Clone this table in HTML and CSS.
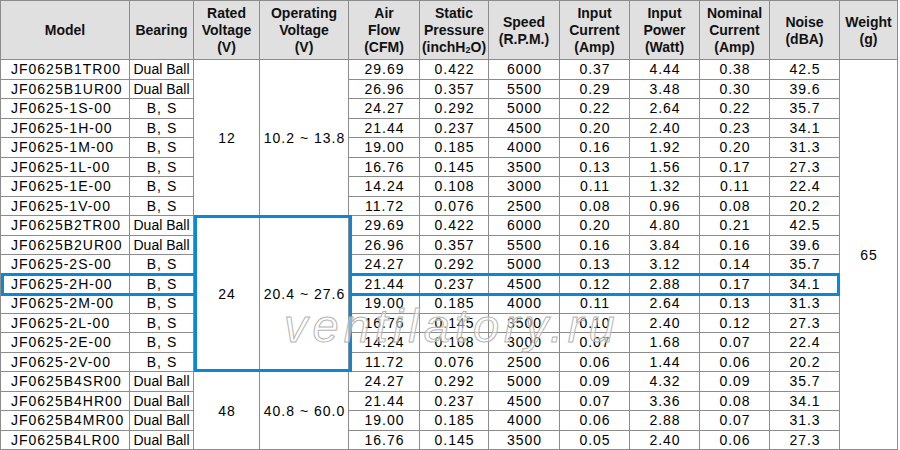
FILE: index.html
```html
<!DOCTYPE html>
<html>
<head>
<meta charset="utf-8">
<link rel="stylesheet" href="styles.css">
</head>
<body>
<div class="sheet">
  <div class="grid">
    <div class="h"><span>Model</span></div>
    <div class="h"><span>Bearing</span></div>
    <div class="h"><span>Rated<br>Voltage<br>(V)</span></div>
    <div class="h"><span>Operating<br>Voltage<br>(V)</span></div>
    <div class="h"><span>Air<br>Flow<br>(CFM)</span></div>
    <div class="h"><span>Static<br>Pressure<br>(inchH<span class="sub">2</span>O)</span></div>
    <div class="h"><span>Speed<br>(R.P.M.)</span></div>
    <div class="h"><span>Input<br>Current<br>(Amp)</span></div>
    <div class="h"><span>Input<br>Power<br>(Watt)</span></div>
    <div class="h"><span>Nominal<br>Current<br>(Amp)</span></div>
    <div class="h"><span>Noise<br>(dBA)</span></div>
    <div class="h"><span>Weight<br>(g)</span></div>

    <div class="c m">JF0625B1TR00</div><div class="c b">Dual Ball</div>
    <div class="c v r8">12</div><div class="c v r8">10.2 ~ 13.8</div>
    <div class="c">29.69</div><div class="c">0.422</div><div class="c">6000</div><div class="c">0.37</div><div class="c">4.44</div><div class="c">0.38</div><div class="c">42.5</div>
    <div class="c v r20">65</div>

    <div class="c m">JF0625B1UR00</div><div class="c b">Dual Ball</div>
    <div class="c">26.96</div><div class="c">0.357</div><div class="c">5500</div><div class="c">0.29</div><div class="c">3.48</div><div class="c">0.30</div><div class="c">39.6</div>

    <div class="c m">JF0625-1S-00</div><div class="c">B, S</div>
    <div class="c">24.27</div><div class="c">0.292</div><div class="c">5000</div><div class="c">0.22</div><div class="c">2.64</div><div class="c">0.22</div><div class="c">35.7</div>

    <div class="c m">JF0625-1H-00</div><div class="c">B, S</div>
    <div class="c">21.44</div><div class="c">0.237</div><div class="c">4500</div><div class="c">0.20</div><div class="c">2.40</div><div class="c">0.23</div><div class="c">34.1</div>

    <div class="c m">JF0625-1M-00</div><div class="c">B, S</div>
    <div class="c">19.00</div><div class="c">0.185</div><div class="c">4000</div><div class="c">0.16</div><div class="c">1.92</div><div class="c">0.20</div><div class="c">31.3</div>

    <div class="c m">JF0625-1L-00</div><div class="c">B, S</div>
    <div class="c">16.76</div><div class="c">0.145</div><div class="c">3500</div><div class="c">0.13</div><div class="c">1.56</div><div class="c">0.17</div><div class="c">27.3</div>

    <div class="c m">JF0625-1E-00</div><div class="c">B, S</div>
    <div class="c">14.24</div><div class="c">0.108</div><div class="c">3000</div><div class="c">0.11</div><div class="c">1.32</div><div class="c">0.11</div><div class="c">22.4</div>

    <div class="c m">JF0625-1V-00</div><div class="c">B, S</div>
    <div class="c">11.72</div><div class="c">0.076</div><div class="c">2500</div><div class="c">0.08</div><div class="c">0.96</div><div class="c">0.08</div><div class="c">20.2</div>

    <div class="c m">JF0625B2TR00</div><div class="c b">Dual Ball</div>
    <div class="c v r8">24</div><div class="c v r8">20.4 ~ 27.6</div>
    <div class="c">29.69</div><div class="c">0.422</div><div class="c">6000</div><div class="c">0.20</div><div class="c">4.80</div><div class="c">0.21</div><div class="c">42.5</div>

    <div class="c m">JF0625B2UR00</div><div class="c b">Dual Ball</div>
    <div class="c">26.96</div><div class="c">0.357</div><div class="c">5500</div><div class="c">0.16</div><div class="c">3.84</div><div class="c">0.16</div><div class="c">39.6</div>

    <div class="c m">JF0625-2S-00</div><div class="c">B, S</div>
    <div class="c">24.27</div><div class="c">0.292</div><div class="c">5000</div><div class="c">0.13</div><div class="c">3.12</div><div class="c">0.14</div><div class="c">35.7</div>

    <div class="c m">JF0625-2H-00</div><div class="c">B, S</div>
    <div class="c">21.44</div><div class="c">0.237</div><div class="c">4500</div><div class="c">0.12</div><div class="c">2.88</div><div class="c">0.17</div><div class="c">34.1</div>

    <div class="c m">JF0625-2M-00</div><div class="c">B, S</div>
    <div class="c">19.00</div><div class="c">0.185</div><div class="c">4000</div><div class="c">0.11</div><div class="c">2.64</div><div class="c">0.13</div><div class="c">31.3</div>

    <div class="c m">JF0625-2L-00</div><div class="c">B, S</div>
    <div class="c">16.76</div><div class="c">0.145</div><div class="c">3500</div><div class="c">0.10</div><div class="c">2.40</div><div class="c">0.12</div><div class="c">27.3</div>

    <div class="c m">JF0625-2E-00</div><div class="c">B, S</div>
    <div class="c">14.24</div><div class="c">0.108</div><div class="c">3000</div><div class="c">0.07</div><div class="c">1.68</div><div class="c">0.07</div><div class="c">22.4</div>

    <div class="c m">JF0625-2V-00</div><div class="c">B, S</div>
    <div class="c">11.72</div><div class="c">0.076</div><div class="c">2500</div><div class="c">0.06</div><div class="c">1.44</div><div class="c">0.06</div><div class="c">20.2</div>

    <div class="c m">JF0625B4SR00</div><div class="c b">Dual Ball</div>
    <div class="c v r4">48</div><div class="c v r4">40.8 ~ 60.0</div>
    <div class="c">24.27</div><div class="c">0.292</div><div class="c">5000</div><div class="c">0.09</div><div class="c">4.32</div><div class="c">0.09</div><div class="c">35.7</div>

    <div class="c m">JF0625B4HR00</div><div class="c b">Dual Ball</div>
    <div class="c">21.44</div><div class="c">0.237</div><div class="c">4500</div><div class="c">0.07</div><div class="c">3.36</div><div class="c">0.08</div><div class="c">34.1</div>

    <div class="c m">JF0625B4MR00</div><div class="c b">Dual Ball</div>
    <div class="c">19.00</div><div class="c">0.185</div><div class="c">4000</div><div class="c">0.06</div><div class="c">2.88</div><div class="c">0.07</div><div class="c">31.3</div>

    <div class="c m">JF0625B4LR00</div><div class="c b">Dual Ball</div>
    <div class="c">16.76</div><div class="c">0.145</div><div class="c">3500</div><div class="c">0.05</div><div class="c">2.40</div><div class="c">0.06</div><div class="c">27.3</div>
  </div>

  <div class="mark mark-volt"></div>
  <div class="mark mark-row-left"></div>
  <div class="mark mark-row-right"></div>
  <div class="watermark">ventilatory.ru</div>
</div>
</body>
</html>
```
FILE: styles.css
```css
html, body {
  margin: 0;
  padding: 0;
  background: #ffffff;
}

body {
  font-family: "Liberation Sans", Arial, sans-serif;
  color: #000;
  overflow: hidden;
}

.sheet {
  position: relative;
  width: 900px;
  height: 450px;
}

.grid {
  display: grid;
  grid-template-columns: 129px 64px 66px 89px 71px 69px 71px 70px 70px 70px 70px 58px;
  grid-template-rows: 59px repeat(20, 19.5px);
  border-left: 1px solid #8c8c8c;
  border-top: 1px solid #8c8c8c;
  width: max-content;
}

.h, .c {
  box-sizing: border-box;
  border-right: 1px solid #8c8c8c;
  border-bottom: 1px solid #8c8c8c;
  display: flex;
  align-items: center;
  justify-content: center;
  text-align: center;
}

.h {
  background: #e0e0e0;
  font-weight: bold;
  font-size: 14px;
  line-height: 17px;
  color: #111;
  padding-top: 1px;
  white-space: nowrap;
}

.sub {
  font-size: 9px;
  vertical-align: -1px;
  line-height: 0;
}

.c {
  font-size: 14px;
  line-height: 18px;
  letter-spacing: 1px;
  padding-left: 1px;
  white-space: nowrap;
  color: #000;
}

.c.m {
  justify-content: flex-start;
  padding-left: 10px;
}

.c.b {
  letter-spacing: 0;
  padding-left: 0;
}

.r8 { grid-row: span 8; }
.r4 { grid-row: span 4; }
.r20 { grid-row: span 20; }

.mark {
  position: absolute;
  box-sizing: border-box;
  border: 3px solid #0a88d8;
}

.mark-volt {
  left: 194px;
  top: 215px;
  width: 158px;
  height: 157px;
}

.mark-row-left {
  left: 1px;
  top: 273px;
  width: 196px;
  height: 23px;
  border-right: none;
}

.mark-row-right {
  left: 349px;
  top: 273px;
  width: 491px;
  height: 23px;
  border-left: none;
}

.watermark {
  position: absolute;
  left: 284px;
  top: 302px;
  font-family: "Liberation Sans", Arial, sans-serif;
  font-style: italic;
  font-size: 47px;
  line-height: 47px;
  letter-spacing: 5px;
  color: rgba(255, 255, 255, 0.45);
  -webkit-text-stroke: 1px #b4b4b4;
  white-space: nowrap;
  pointer-events: none;
}
```
